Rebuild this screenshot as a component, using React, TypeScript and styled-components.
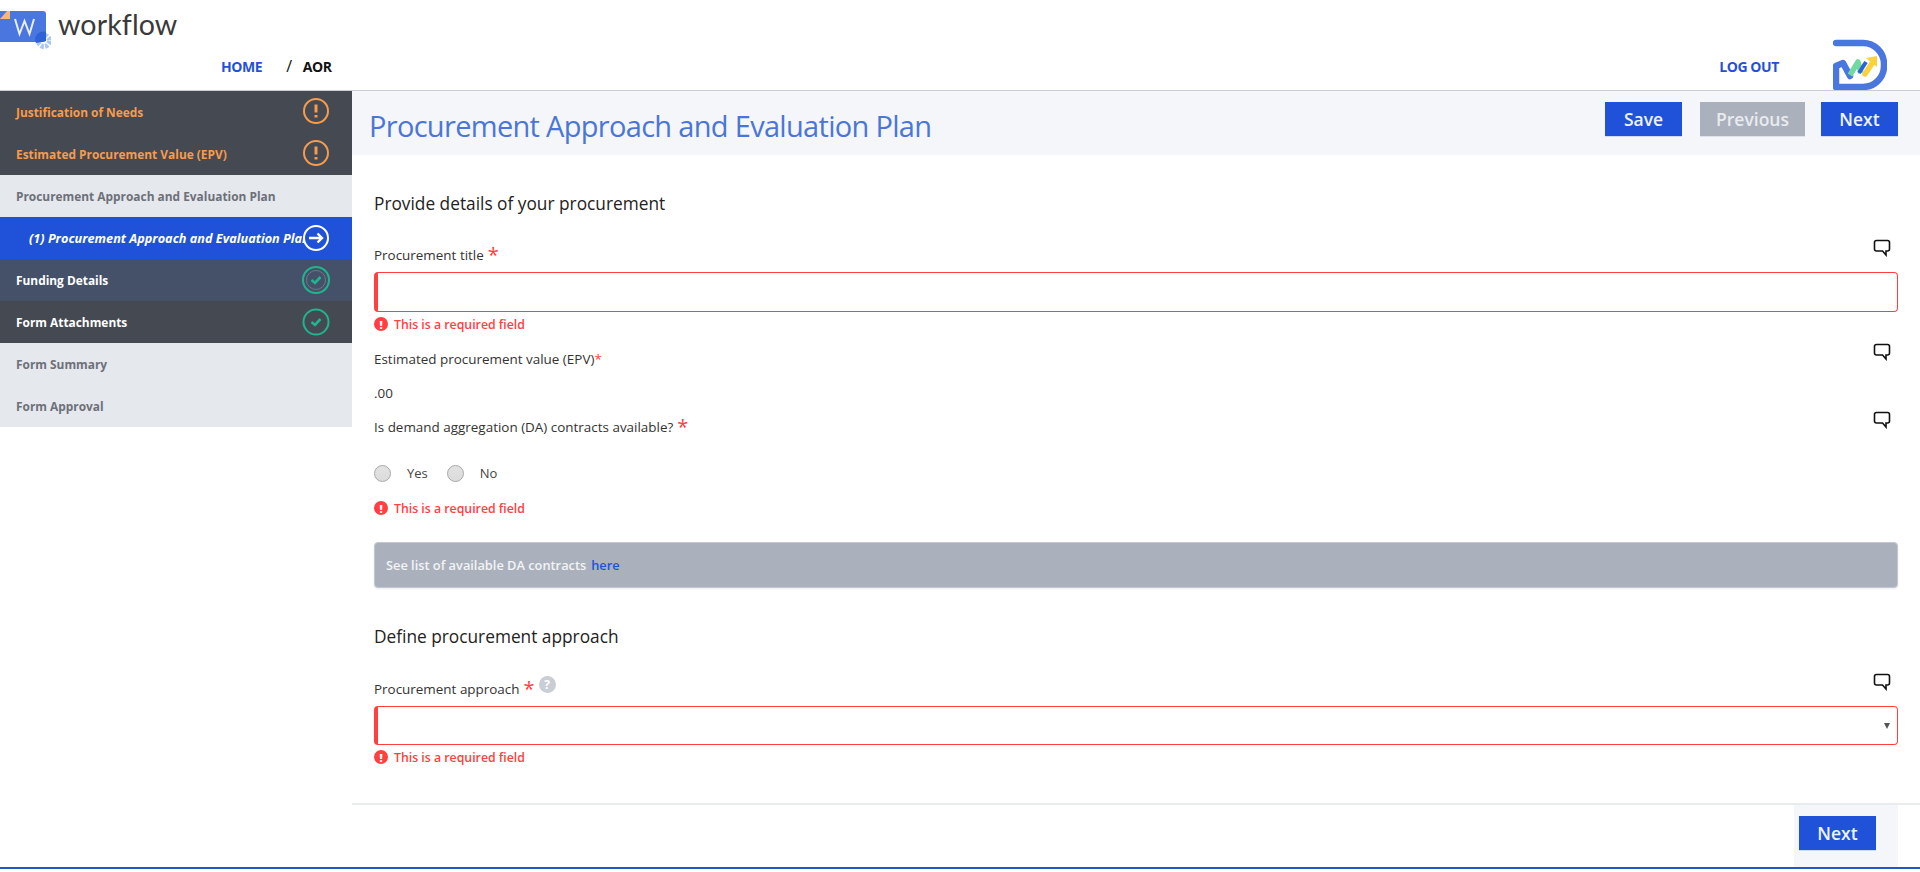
import React from 'react';
import styled, { createGlobalStyle } from 'styled-components';

const GlobalStyle = createGlobalStyle`
  html, body {
    margin: 0;
    padding: 0;
    background: #fff;
    font-family: "Open Sans", "Liberation Sans", sans-serif;
    overflow: hidden;
  }
  * { box-sizing: border-box; }
`;

const Header = styled.header`
  display: flex;
  height: 90px;
`;

const HeaderLeft = styled.div`
  flex: 1;
  display: flex;
  flex-direction: column;
`;

const Brand = styled.div`
  display: flex;
  align-items: flex-start;
  height: 52px;
  padding-top: 10px;
`;

const BrandName = styled.span`
  font-family: "Lato", "Open Sans", sans-serif;
  font-size: 28.6px;
  line-height: 28px;
  letter-spacing: 0.1px;
  color: #3a3a3a;
  margin-left: 7px;
`;

const Breadcrumb = styled.nav`
  display: flex;
  align-items: center;
  padding-left: 221px;
  height: 28px;
  font-size: 14px;
  font-weight: 700;
`;

const NavLink = styled.a`
  color: #1f52d8;
  letter-spacing: -0.4px;
`;

const Crumb = styled.span`
  color: #111;
  letter-spacing: -0.4px;
`;

const Slash = styled(Crumb)`
  font-weight: 400;
  font-size: 16px;
  margin: 0 11px 0 24px;
`;

const HeaderRight = styled.div`
  display: flex;
  align-items: center;
  align-self: flex-end;
  gap: 54px;
  padding-right: 33px;
`;

const LogOut = styled(NavLink)`
  margin-top: 3px;
  font-size: 14px;
  font-weight: 700;
  word-spacing: 0;
`;

const Layout = styled.div`
  display: flex;
  height: 777px;
  border-top: 1px solid #c9ccd8;
`;

const Sidebar = styled.aside`
  width: 352px;
  flex-shrink: 0;
`;

const tones = {
  warn: { bg: '#444952', fg: '#f79b4c' },
  idle: { bg: '#e5e8ed', fg: '#6d7079' },
  active: { bg: '#1f52d8', fg: '#fff' },
  hover: { bg: '#455168', fg: '#fff' },
  done: { bg: '#444952', fg: '#fff' },
};

type Tone = keyof typeof tones;

const NavRow = styled.div<{ $tone: Tone }>`
  position: relative;
  display: flex;
  align-items: center;
  justify-content: space-between;
  height: 42px;
  padding: 0 19px 0 ${p => (p.$tone === 'active' ? '29px' : '16px')};
  background: ${p => tones[p.$tone].bg};
  color: ${p => tones[p.$tone].fg};
  font-size: ${p => (p.$tone === 'active' ? '12.7px' : '11.9px')};
  font-weight: 700;
  font-style: ${p => (p.$tone === 'active' ? 'italic' : 'normal')};
  white-space: nowrap;
`;

const RowIcon = styled.svg`
  position: absolute;
  right: 21px;
  top: 6px;
  width: 30px;
  height: 30px;
  fill: none;
`;

const Main = styled.main`
  flex: 1;
  display: flex;
  flex-direction: column;
  min-width: 0;
`;

const TitleBar = styled.div`
  display: flex;
  align-items: flex-start;
  justify-content: space-between;
  height: 64px;
  background: #f4f6fa;
  padding: 11px 22px 0 17px;
`;

const Title = styled.h1`
  margin: 4px 0 0;
  font-size: 29px;
  line-height: 40px;
  font-weight: 400;
  letter-spacing: -0.69px;
  color: #4a76d8;
`;

const Actions = styled.div`
  display: flex;
  gap: 16px;
`;

const Button = styled.button<{ $muted?: boolean }>`
  height: 35px;
  min-width: 77px;
  padding: 0 16px;
  border: 0;
  border-bottom: 1px solid ${p => (p.$muted ? '#dfe2e8' : '#cfdbf5')};
  background: ${p => (p.$muted ? '#aab1bc' : '#1f52d8')};
  color: ${p => (p.$muted ? '#e9ebef' : '#eef2fc')};
  font-family: inherit;
  font-size: 17.5px;
  font-weight: 600;
`;

const SaveButton = styled(Button)`
  margin-right: 2px;
`;

const Content = styled.div`
  flex: 1;
  padding: 37px 22px 0;
`;

const SectionTitle = styled.h2`
  margin: 0;
  font-size: 17.3px;
  line-height: 24px;
  font-weight: 400;
  color: #222;
`;

const LabelRow = styled.div`
  position: relative;
  display: flex;
  align-items: center;
  height: 20px;
  font-size: 13.45px;
  color: #333;
`;

const FirstLabel = styled(LabelRow)`
  margin-top: 29px;
`;

const Star = styled.span`
  align-self: flex-start;
  margin-left: 4px;
  color: #ff4040;
  font-size: 20px;
  line-height: 20px;
`;

const SmallStar = styled.span`
  color: #ff4040;
`;

const Chat = styled.svg`
  position: absolute;
  right: 7px;
  top: -6px;
  width: 18px;
  height: 18px;
  fill: none;
  stroke: #111;
  stroke-width: 1.6;
`;

const Help = styled.span`
  display: inline-flex;
  align-items: center;
  justify-content: center;
  align-self: flex-start;
  width: 17px;
  height: 17px;
  margin: -3px 0 0 4px;
  border-radius: 50%;
  background: #c9cdd4;
  color: #fff;
  font-size: 12px;
  font-weight: 700;
`;

const TextInput = styled.input`
  display: block;
  width: 100%;
  height: 40px;
  margin-top: 7px;
  border: 1px solid #ff4040;
  border-left-width: 4px;
  border-radius: 4px;
  background: #fff;
  outline: none;
`;

const SelectWrap = styled.div`
  position: relative;
`;

const Select = styled.select`
  display: block;
  width: 100%;
  height: 39px;
  margin-top: 7px;
  border: 1px solid #ff4040;
  border-left-width: 4px;
  border-radius: 4px;
  background: #fff;
  appearance: none;
  outline: none;
`;

const Caret = styled.span`
  position: absolute;
  right: 8px;
  top: 17px;
  width: 0;
  height: 0;
  border-left: 3.5px solid transparent;
  border-right: 3.5px solid transparent;
  border-top: 6px solid #555;
`;

const ErrorLine = styled.div`
  display: flex;
  align-items: center;
  gap: 6px;
  height: 20px;
  margin-top: 2px;
  font-size: 12.3px;
  font-weight: 600;
  color: #ff4040;
`;

const ErrorDot = styled.span`
  display: inline-flex;
  align-items: center;
  justify-content: center;
  width: 14px;
  height: 14px;
  border-radius: 50%;
  background: #ff4040;
  color: #fff;
  font-size: 11px;
  font-weight: 800;
`;

const EpvLabel = styled(LabelRow)`
  margin-top: 15px;
`;

const Value = styled.div`
  margin-top: 14px;
  height: 20px;
  font-size: 13.45px;
  line-height: 20px;
  color: #333;
`;

const DemandLabel = styled(LabelRow)`
  margin-top: 14px;
`;

const Radios = styled.div`
  display: flex;
  align-items: center;
  height: 20px;
  margin-top: 26px;
  font-size: 13px;
  color: #444;
`;

const Radio = styled.span`
  width: 17px;
  height: 17px;
  border-radius: 50%;
  border: 1px solid #a8a8a8;
  background: linear-gradient(#e2e2e2, #dcdcdc);
`;

const RadioLabel = styled.span`
  margin: 0 19px 0 16px;
`;

const RadioError = styled(ErrorLine)`
  margin-top: 15px;
`;

const Banner = styled.div`
  display: flex;
  align-items: center;
  height: 46px;
  margin-top: 24px;
  padding-left: 11px;
  border: 1px solid #c3c8d0;
  border-radius: 4px;
  background: #aab1bc;
  box-shadow: 0 1px 2px rgba(0, 0, 0, 0.08);
  color: #f2f3f5;
  font-size: 12.8px;
  font-weight: 600;
`;

const BannerLink = styled.a`
  margin-left: 5px;
  color: #1f52d8;
`;

const SecondTitle = styled(SectionTitle)`
  margin-top: 37px;
`;

const ApproachLabel = styled(LabelRow)`
  margin-top: 30px;
`;

const Footer = styled.div`
  display: flex;
  justify-content: flex-end;
  height: 64px;
  padding-right: 22px;
  border-top: 2px solid #e9ecef;
`;

const FooterPatch = styled.div`
  width: 104px;
  padding: 11px 0 0 5px;
  background: #f4f6fa;
`;

const BottomLine = styled.div`
  height: 2px;
  background: #2456c8;
`;

const WorkflowLogo = () => (
  <svg width="51" height="42" viewBox="0 0 51 42">
    <rect x="-4" y="1" width="50" height="31" rx="3" fill="#4a76e0" />
    <path d="M0 9 L7 1 H10 V9 Z" fill="#f9b676" />
    <path d="M15 9 L19.5 24 L24.5 11 L29.5 24 L34 9" fill="none" stroke="#e9effc" strokeWidth="2" />
    <circle cx="44" cy="31" r="5.5" fill="none" stroke="#a9c8f2" strokeWidth="5" strokeDasharray="3 1.3" />
    <path d="M36 33 A8 8 0 0 1 46 22 L46 31 Z" fill="#2f62d6" />
  </svg>
);

const DashLogo = () => (
  <svg width="54" height="51" viewBox="0 0 54 51" fill="none">
    <path d="M3 4 H30 A21 21 0 0 1 51 25 V27 A21 21 0 0 1 30 48 H3 V27 L10 24 L17 37" stroke="#4a76e0" strokeWidth="6.5" strokeLinejoin="round" strokeLinecap="round" />
    <path d="M17 36 L25 23 L28 34" stroke="#72d9a0" strokeWidth="5.5" strokeLinejoin="round" />
    <path d="M26 34 L33 23" stroke="#2f62d6" strokeWidth="4" />
    <path d="M32 35 L40 23" stroke="#fbd13f" strokeWidth="5.5" strokeLinecap="round" />
    <path d="M33 19 L44 17 L44 28 Z" fill="#fbd13f" />
  </svg>
);

const AlertIcon = () => (
  <RowIcon viewBox="0 0 30 30" stroke="#f79b4c">
    <circle cx="15" cy="14" r="12" strokeWidth="2" />
    <path d="M15 7.5 V15.5" strokeWidth="3" />
    <path d="M15 18 V20.5" strokeWidth="3" />
  </RowIcon>
);

const ArrowIcon = () => (
  <RowIcon viewBox="0 0 30 30" stroke="#fff">
    <circle cx="15" cy="15" r="12" strokeWidth="2" fill="#1f52d8" />
    <path d="M8 15 H21 M16.5 10.5 L21 15 L16.5 19.5" strokeWidth="2.4" />
  </RowIcon>
);

const CheckIcon = ({ ring }: { ring?: boolean }) => (
  <RowIcon viewBox="0 0 30 30" stroke="#1fb58f">
    <circle cx="15" cy="15" r={ring ? 13 : 12.5} strokeWidth="2" />
    {ring && <circle cx="15" cy="15" r="9.5" strokeWidth="1" stroke="#6e7789" />}
    <path d="M10.5 15 L14 18 L19.5 12" strokeWidth="2.6" />
  </RowIcon>
);

const ChatIcon = () => (
  <Chat viewBox="0 0 18 18">
    <path d="M3.5 1.5 H14.5 Q16.5 1.5 16.5 3.5 V10 Q16.5 12 14.5 12 H13 V16 L9.5 12 H3.5 Q1.5 12 1.5 10 V3.5 Q1.5 1.5 3.5 1.5 Z" />
  </Chat>
);

const FieldError = () => (
  <>
    <ErrorDot>!</ErrorDot>
    This is a required field
  </>
);

const navItems: { label: string; tone: Tone; icon?: React.ReactNode }[] = [
  { label: 'Justification of Needs', tone: 'warn', icon: <AlertIcon /> },
  { label: 'Estimated Procurement Value (EPV)', tone: 'warn', icon: <AlertIcon /> },
  { label: 'Procurement Approach and Evaluation Plan', tone: 'idle' },
  { label: '(1) Procurement Approach and Evaluation Plan', tone: 'active', icon: <ArrowIcon /> },
  { label: 'Funding Details', tone: 'hover', icon: <CheckIcon ring /> },
  { label: 'Form Attachments', tone: 'done', icon: <CheckIcon /> },
  { label: 'Form Summary', tone: 'idle' },
  { label: 'Form Approval', tone: 'idle' },
];

export default function App() {
  return (
    <>
      <GlobalStyle />
      <Header>
        <HeaderLeft>
          <Brand>
            <WorkflowLogo />
            <BrandName>workflow</BrandName>
          </Brand>
          <Breadcrumb>
            <NavLink>HOME</NavLink>
            <Slash>/</Slash>
            <Crumb>AOR</Crumb>
          </Breadcrumb>
        </HeaderLeft>
        <HeaderRight>
          <LogOut>LOG OUT</LogOut>
          <DashLogo />
        </HeaderRight>
      </Header>
      <Layout>
        <Sidebar>
          {navItems.map(item => (
            <NavRow key={item.label} $tone={item.tone}>
              {item.label}
              {item.icon}
            </NavRow>
          ))}
        </Sidebar>
        <Main>
          <TitleBar>
            <Title>Procurement Approach and Evaluation Plan</Title>
            <Actions>
              <SaveButton>Save</SaveButton>
              <Button $muted>Previous</Button>
              <Button>Next</Button>
            </Actions>
          </TitleBar>
          <Content>
            <SectionTitle>Provide details of your procurement</SectionTitle>
            <FirstLabel>
              Procurement title<Star>*</Star>
              <ChatIcon />
            </FirstLabel>
            <TextInput />
            <ErrorLine>
              <FieldError />
            </ErrorLine>
            <EpvLabel>
              Estimated procurement value (EPV)<SmallStar>*</SmallStar>
              <ChatIcon />
            </EpvLabel>
            <Value>.00</Value>
            <DemandLabel>
              Is demand aggregation (DA) contracts available?<Star>*</Star>
              <ChatIcon />
            </DemandLabel>
            <Radios>
              <Radio />
              <RadioLabel>Yes</RadioLabel>
              <Radio />
              <RadioLabel>No</RadioLabel>
            </Radios>
            <RadioError>
              <FieldError />
            </RadioError>
            <Banner>
              See list of available DA contracts<BannerLink>here</BannerLink>
            </Banner>
            <SecondTitle>Define procurement approach</SecondTitle>
            <ApproachLabel>
              Procurement approach<Star>*</Star>
              <Help>?</Help>
              <ChatIcon />
            </ApproachLabel>
            <SelectWrap>
              <Select />
              <Caret />
            </SelectWrap>
            <ErrorLine>
              <FieldError />
            </ErrorLine>
          </Content>
          <Footer>
            <FooterPatch>
              <Button>Next</Button>
            </FooterPatch>
          </Footer>
        </Main>
      </Layout>
      <BottomLine />
    </>
  );
}
